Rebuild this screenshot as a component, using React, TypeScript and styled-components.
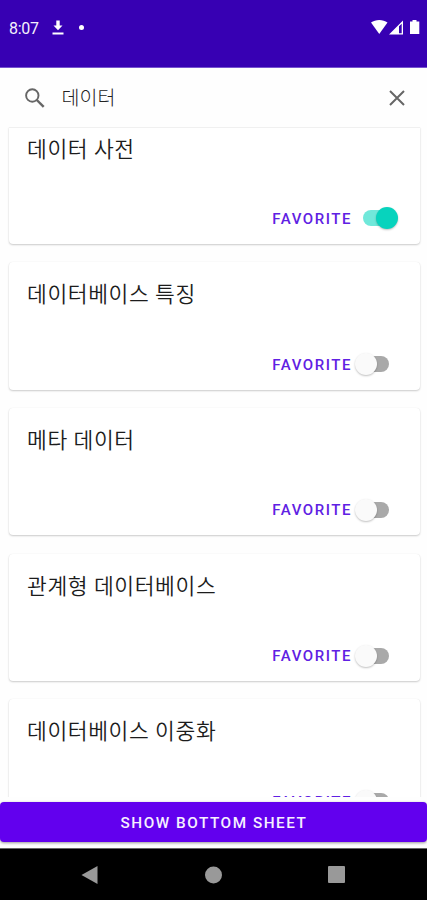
import React from "react";
import styled, { createGlobalStyle } from "styled-components";

const GlobalStyle = createGlobalStyle`
  *, *::before, *::after { box-sizing: border-box; }
  html, body { margin: 0; padding: 0; background: #fefefe; }
  body { font-family: Roboto, "Noto Sans CJK KR", sans-serif; overflow: hidden; }
`;

const Screen = styled.div`
  display: flex;
  flex-direction: column;
  width: 100%;
  height: 900px;
  background: #fefefe;
  overflow: hidden;
`;

const StatusBar = styled.header`
  display: flex;
  justify-content: space-between;
  flex: 0 0 68px;
  padding: 18px 6px 0 9px;
  background: #3700b3;
  border-bottom: 1px solid #7653cf;
  color: #f4f0fc;
`;

const StatusGroup = styled.div`
  display: flex;
  align-items: center;
  height: 19px;
`;

const Clock = styled.time`
  width: 43px;
  padding-top: 1px;
  font-size: 16px;
  line-height: 19px;
  letter-spacing: -0.25px;
`;

const Notice = styled.span`
  width: 5px;
  height: 5px;
  margin-left: 15px;
  border-radius: 50%;
  background: #fff;
`;

const SearchBar = styled.div`
  display: flex;
  align-items: center;
  flex: 0 0 59px;
  padding: 0 20px 0 23px;
  color: #666;
`;

const Query = styled.span`
  flex: 1;
  padding: 2px 0 0 14.5px;
  font-size: 19.5px;
  font-weight: 300;
  line-height: 28px;
  color: #222;
`;

const List = styled.main`
  display: flex;
  flex-direction: column;
  justify-content: flex-start;
  gap: 18.2px;
  flex: 0 0 670px;
  padding: 0 7.5px 0 9px;
  overflow: hidden;
`;

const Card = styled.article<{ $clipped?: boolean }>`
  display: flex;
  flex-direction: column;
  justify-content: space-between;
  flex: 0 0 ${(p) => (p.$clipped ? "116.8px" : "127.6px")};
  padding: ${(p) => (p.$clipped ? "6.5px" : "18px")} 21.5px 10.5px 18px;
  border-radius: ${(p) => (p.$clipped ? "0 0 4px 4px" : "4px")};
  background: #fff;
  box-shadow: 0 1px 2px rgba(0, 0, 0, 0.2), 0 0 1px rgba(0, 0, 0, 0.08);
  ${(p) => p.$clipped && "border-top: 1px solid #f0f0f0;"}
`;

const Title = styled.h2`
  margin: 0;
  font-size: 21.5px;
  font-weight: 350;
  line-height: 30px;
  letter-spacing: 0.6px;
  color: #1c1c1c;
`;

const Actions = styled.div`
  display: flex;
  justify-content: flex-end;
  align-items: center;
  height: 30px;
`;

const Favorite = styled.span`
  margin-right: 3px;
  padding-top: 1px;
  font-size: 15px;
  font-weight: 500;
  line-height: 20px;
  letter-spacing: 1.55px;
  color: #6021e3;
`;

const Toggle = styled.span<{ $on: boolean }>`
  display: flex;
  align-items: center;
  justify-content: ${(p) => (p.$on ? "flex-end" : "flex-start")};
  width: 43px;
  height: 24px;
`;

const Track = styled.span<{ $on: boolean }>`
  width: 27px;
  height: 16px;
  margin-left: ${(p) => (p.$on ? "0" : "-15px")};
  margin-right: ${(p) => (p.$on ? "-14px" : "0")};
  order: ${(p) => (p.$on ? 0 : 1)};
  border-radius: 8px;
  background: ${(p) => (p.$on ? "#70e8da" : "#a9a9a9")};
`;

const Thumb = styled.span<{ $on: boolean }>`
  z-index: 1;
  width: 22px;
  height: 22px;
  border-radius: 50%;
  background: ${(p) => (p.$on ? "#07d3bd" : "#fafafa")};
  box-shadow: 0 1px 2px rgba(0, 0, 0, 0.25);
`;

const SheetButton = styled.button`
  flex: 0 0 40px;
  margin: 5px 0 6px;
  padding: 2px 0 0 1px;
  border: 0;
  border-radius: 4px;
  background: #6200ee;
  color: #f6f0ff;
  font-family: Roboto, sans-serif;
  font-size: 15.3px;
  font-weight: 500;
  letter-spacing: 1.53px;
  box-shadow: 0 1px 3px rgba(0, 0, 0, 0.4);
`;

const NavBar = styled.nav`
  display: flex;
  justify-content: space-between;
  align-items: center;
  flex: 1;
  padding: 0 82px 0 81px;
  background: #000;
  border-top: 1px solid #666;
`;

const entries = [
  { title: "데이터 사전", on: true },
  { title: "데이터베이스 특징", on: false },
  { title: "메타 데이터", on: false },
  { title: "관계형 데이터베이스", on: false },
  { title: "데이터베이스 이중화", on: false },
];

function DownloadIcon() {
  return (
    <svg width="12" height="16" viewBox="0 0 12 16" fill="#fff">
      <path d="M4.300 .500h3.400v5H10.500L6 10.300 1.500 5.500h2.800zM.500 12.500h11v2H.500z" />
    </svg>
  );
}

function ConnectionIcons() {
  return (
    <svg width="50" height="19" viewBox="0 0 50 19" fill="#fff">
      <path d="M0 4.600C4.500 1.100 12 1.100 16.500 4.600L8.250 16z" />
      <path fillRule="evenodd" d="M32 2.500V16.500H18zM28 8.300V15.200H30.700V5.700z" />
      <path d="M41.500 2h4v1.500h2.800V16h-9.300V3.500h2.500z" />
    </svg>
  );
}

function SearchIcon() {
  return (
    <svg width="24" height="24" viewBox="0 0 24 24" fill="none" stroke="currentColor">
      <circle cx="9.300" cy="9.500" r="6.200" strokeWidth="1.900" />
      <path d="M13.800 14L20.700 20.900" strokeWidth="2.400" />
    </svg>
  );
}

function CloseIcon() {
  return (
    <svg width="20" height="20" viewBox="0 0 20 20" fill="none" stroke="currentColor" strokeWidth="2">
      <path d="M3 3L17 17M17 3L3 17" />
    </svg>
  );
}

export default function App() {
  return (
    <>
      <GlobalStyle />
      <Screen>
        <StatusBar>
          <StatusGroup>
            <Clock>8:07</Clock>
            <DownloadIcon />
            <Notice />
          </StatusGroup>
          <StatusGroup>
            <ConnectionIcons />
          </StatusGroup>
        </StatusBar>
        <SearchBar>
          <SearchIcon />
          <Query>데이터</Query>
          <CloseIcon />
        </SearchBar>
        <List>
          {entries.map((entry, index) => (
            <Card key={entry.title} $clipped={index === 0}>
              <Title>{entry.title}</Title>
              <Actions>
                <Favorite>FAVORITE</Favorite>
                <Toggle $on={entry.on}>
                  <Track $on={entry.on} />
                  <Thumb $on={entry.on} />
                </Toggle>
              </Actions>
            </Card>
          ))}
        </List>
        <SheetButton>SHOW BOTTOM SHEET</SheetButton>
        <NavBar>
          <svg width="17" height="20" viewBox="0 0 17 20" fill="#999">
            <path d="M.5 10L16.500 1v18z" />
          </svg>
          <svg width="18" height="18" viewBox="0 0 18 18" fill="#999">
            <circle cx="9.500" cy="9" r="8.500" />
          </svg>
          <svg width="17" height="17" viewBox="0 0 17 17" fill="#999">
            <rect width="17" height="17" rx="1" />
          </svg>
        </NavBar>
      </Screen>
    </>
  );
}
